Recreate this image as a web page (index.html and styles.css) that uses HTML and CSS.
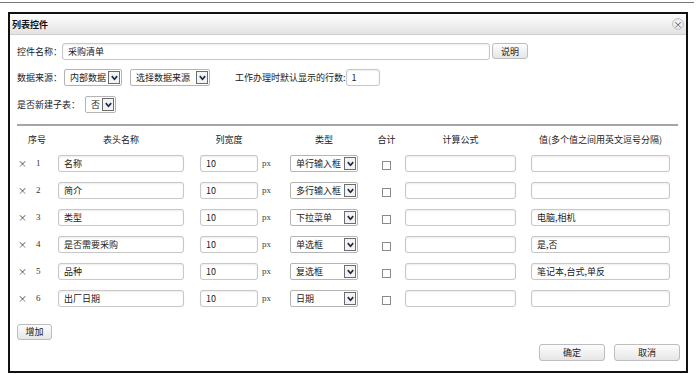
FILE: index.html
```html
<!DOCTYPE html>
<html lang="zh-CN">
  <head>
    <meta charset="UTF-8" />
    <meta name="viewport" content="width=device-width, initial-scale=1.0" />
    <title>列表控件</title>
    <link rel="stylesheet" href="styles.css">
  </head>
  <body>
    <div class="topline"></div>
    <div class="dialog">
      <div class="titlebar">
        <span class="title">列表控件</span>
        <span class="close">×</span>
      </div>

      <div class="content">
        <div class="form-row">
          <label>控件名称：</label>
          <input class="ipt ipt-name" type="text" value="采购清单" />
          <button class="btn btn-help">说明</button>
        </div>
        <div class="form-row">
          <label>数据来源：</label>
          <div class="sel sel-src"><span>内部数据</span><i class="arrow"><svg viewBox="0 0 10 10"><path d="M2 3.5 L5 7 L8 3.5" /></svg></i></div>
          <div class="sel sel-pick"><span>选择数据来源</span><i class="arrow"><svg viewBox="0 0 10 10"><path d="M2 3.5 L5 7 L8 3.5" /></svg></i></div>
          <label class="lbl-rows">工作办理时默认显示的行数:</label>
          <input class="ipt ipt-rows" type="text" value="1" />
        </div>
        <div class="form-row">
          <label>是否新建子表：</label>
          <div class="sel sel-sub"><span>否</span><i class="arrow"><svg viewBox="0 0 10 10"><path d="M2 3.5 L5 7 L8 3.5" /></svg></i></div>
        </div>

        <div class="line"></div>

        <table class="fields">
          <colgroup>
            <col style="width:18px" />
            <col style="width:18px" />
            <col style="width:136px" />
            <col style="width:74px" />
            <col style="width:32px" />
            <col style="width:68px" />
            <col style="width:47px" />
            <col style="width:111px" />
            <col style="width:154px" />
          </colgroup>
          <thead>
            <tr>
              <th colspan="2" class="c-no">序号</th>
              <th class="c-name">表头名称</th>
              <th class="c-width">列宽度</th>
              <th></th>
              <th>类型</th>
              <th class="c-sum">合计</th>
              <th>计算公式</th>
              <th class="c-value">值(多个值之间用英文逗号分隔)</th>
            </tr>
          </thead>
          <tbody>
            <tr>
              <td class="del">×</td><td class="num">1</td>
              <td class="c-name"><input class="ipt w-name" type="text" value="名称" /></td>
              <td class="c-width"><input class="ipt w-width" type="text" value="10" /></td>
              <td class="px">px</td>
              <td><div class="sel sel-type"><span>单行输入框</span><i class="arrow"><svg viewBox="0 0 10 10"><path d="M2 3.5 L5 7 L8 3.5" /></svg></i></div></td>
              <td class="c-sum"><span class="chk"></span></td>
              <td><input class="ipt w-formula" type="text" value="" /></td>
              <td class="c-value"><input class="ipt w-value" type="text" value="" /></td>
            </tr>
            <tr>
              <td class="del">×</td><td class="num">2</td>
              <td class="c-name"><input class="ipt w-name" type="text" value="简介" /></td>
              <td class="c-width"><input class="ipt w-width" type="text" value="10" /></td>
              <td class="px">px</td>
              <td><div class="sel sel-type"><span>多行输入框</span><i class="arrow"><svg viewBox="0 0 10 10"><path d="M2 3.5 L5 7 L8 3.5" /></svg></i></div></td>
              <td class="c-sum"><span class="chk"></span></td>
              <td><input class="ipt w-formula" type="text" value="" /></td>
              <td class="c-value"><input class="ipt w-value" type="text" value="" /></td>
            </tr>
            <tr>
              <td class="del">×</td><td class="num">3</td>
              <td class="c-name"><input class="ipt w-name" type="text" value="类型" /></td>
              <td class="c-width"><input class="ipt w-width" type="text" value="10" /></td>
              <td class="px">px</td>
              <td><div class="sel sel-type"><span>下拉菜单</span><i class="arrow"><svg viewBox="0 0 10 10"><path d="M2 3.5 L5 7 L8 3.5" /></svg></i></div></td>
              <td class="c-sum"><span class="chk"></span></td>
              <td><input class="ipt w-formula" type="text" value="" /></td>
              <td class="c-value"><input class="ipt w-value" type="text" value="电脑,相机" /></td>
            </tr>
            <tr>
              <td class="del">×</td><td class="num">4</td>
              <td class="c-name"><input class="ipt w-name" type="text" value="是否需要采购" /></td>
              <td class="c-width"><input class="ipt w-width" type="text" value="10" /></td>
              <td class="px">px</td>
              <td><div class="sel sel-type"><span>单选框</span><i class="arrow"><svg viewBox="0 0 10 10"><path d="M2 3.5 L5 7 L8 3.5" /></svg></i></div></td>
              <td class="c-sum"><span class="chk"></span></td>
              <td><input class="ipt w-formula" type="text" value="" /></td>
              <td class="c-value"><input class="ipt w-value" type="text" value="是,否" /></td>
            </tr>
            <tr>
              <td class="del">×</td><td class="num">5</td>
              <td class="c-name"><input class="ipt w-name" type="text" value="品种" /></td>
              <td class="c-width"><input class="ipt w-width" type="text" value="10" /></td>
              <td class="px">px</td>
              <td><div class="sel sel-type"><span>复选框</span><i class="arrow"><svg viewBox="0 0 10 10"><path d="M2 3.5 L5 7 L8 3.5" /></svg></i></div></td>
              <td class="c-sum"><span class="chk"></span></td>
              <td><input class="ipt w-formula" type="text" value="" /></td>
              <td class="c-value"><input class="ipt w-value" type="text" value="笔记本,台式,单反" /></td>
            </tr>
            <tr>
              <td class="del">×</td><td class="num">6</td>
              <td class="c-name"><input class="ipt w-name" type="text" value="出厂日期" /></td>
              <td class="c-width"><input class="ipt w-width" type="text" value="10" /></td>
              <td class="px">px</td>
              <td><div class="sel sel-type"><span>日期</span><i class="arrow"><svg viewBox="0 0 10 10"><path d="M2 3.5 L5 7 L8 3.5" /></svg></i></div></td>
              <td class="c-sum"><span class="chk"></span></td>
              <td><input class="ipt w-formula" type="text" value="" /></td>
              <td class="c-value"><input class="ipt w-value" type="text" value="" /></td>
            </tr>
          </tbody>
        </table>

        <button class="btn btn-add">增加</button>

        <div class="footer">
          <button class="btn btn-foot">确定</button>
          <button class="btn btn-foot">取消</button>
        </div>
      </div>
    </div>
  </body>
</html>
```

FILE: styles.css
```css
* {
  margin: 0;
  padding: 0;
  box-sizing: border-box;
}
body {
  background: #fff;
  color: #222;
  font-family: "Noto Sans CJK SC", "Noto Sans", sans-serif;
  font-size: 9px;
}
.topline {
  width: 694px;
  height: 1px;
  margin-top: 2px;
  background: #777;
}
/* 弹窗 */
.dialog {
  width: 680px;
  height: 361px;
  margin: 9px 0 0 8px;
  border: 2px solid #111;
  background: #fff;
}
.titlebar {
  display: flex;
  justify-content: space-between;
  align-items: center;
  height: 21px;
  padding: 0 2px 0 2px;
  background: linear-gradient(#fefefe, #e3e3e3);
  border-bottom: 1px solid #cfcfcf;
}
.title {
  font-weight: bold;
  color: #111;
}
.close {
  display: flex;
  justify-content: center;
  align-items: center;
  width: 12px;
  height: 12px;
  border: 1px solid #c4c4c4;
  border-radius: 50%;
  background: radial-gradient(#fff, #dedede);
  color: #444;
  font-size: 9px;
  line-height: 1;
}
.content {
  padding: 3px 4px 0 7px;
}
/* 表单行 */
.form-row {
  display: flex;
  align-items: center;
  height: 26.5px;
}
.form-row label {
  color: #222;
}
.ipt {
  height: 17px;
  padding: 0 5px;
  border: 1px solid #c8c8c8;
  border-radius: 3px;
  background: #fff;
  box-shadow: inset 0 1px 2px rgba(0, 0, 0, 0.08), 0 0 1px rgba(0, 0, 0, 0.08);
  font-family: inherit;
  font-size: 9px;
  color: #222;
  outline: none;
}
.ipt-name {
  width: 428px;
}
.ipt-rows {
  width: 34px;
  margin-left: 0;
}
.lbl-rows {
  margin-left: 25px;
}
.btn {
  height: 16px;
  border: 1px solid #bdbdbd;
  border-radius: 3px;
  background: linear-gradient(#fdfdfd, #e6e6e6);
  font-family: inherit;
  font-size: 9px;
  color: #222;
}
.btn-help {
  width: 36px;
  margin-left: 2px;
}
/* 下拉框 */
.sel {
  display: inline-flex;
  align-items: center;
  height: 17px;
  padding: 0 1px 0 5px;
  border: 1px solid #b4b4b4;
  border-radius: 2px;
  background: #fff;
  white-space: nowrap;
}
.sel span {
  flex: 1;
}
.arrow {
  display: flex;
  justify-content: center;
  align-items: center;
  width: 12px;
  height: 13px;
  border: 1px solid #6d6d6d;
  background: #f3f3f3;
}
.arrow svg {
  width: 9px;
  height: 9px;
  fill: none;
  stroke: #1b2a4a;
  stroke-width: 1.8;
}
.sel-src {
  width: 58px;
  margin-left: 2px;
}
.sel-pick {
  width: 80px;
  margin-left: 8px;
}
.sel-sub {
  width: 31px;
  margin-left: 5px;
}
.sel-type {
  width: 68px;
}
.line {
  height: 2px;
  margin: 6px 4px 0 0;
  background: #a6a6a6;
}
/* 字段表格 */
.fields {
  margin: 4px 0 0 -5px;
  border-collapse: collapse;
  table-layout: fixed;
}
.fields th {
  height: 20px;
  font-weight: normal;
  text-align: center;
  color: #222;
}
.fields td {
  height: 27px;
  vertical-align: middle;
}
.fields .c-no {
  padding-left: 16px;
  text-align: left;
}
.c-name {
  padding-left: 10px;
}
.c-width {
  padding-left: 16px;
}
.c-sum {
  padding-left: 10px;
  text-align: center;
}
.c-value {
  padding-left: 15px;
}
.del {
  padding-left: 6px;
  color: #444;
}
.num {
  padding-left: 6px;
  font-family: "Liberation Serif", serif;
  color: #333;
}
.px {
  padding-left: 4px;
  font-family: "Liberation Serif", serif;
  color: #444;
}
.w-name {
  width: 126px;
}
.w-width {
  width: 58px;
}
.w-formula {
  width: 111px;
}
.w-value {
  width: 139px;
}
.chk {
  display: inline-block;
  width: 9px;
  height: 9px;
  margin-top: 2px;
  border: 1px solid #8a8a8a;
  background: #fff;
  vertical-align: middle;
}
.btn-add {
  width: 35px;
  margin-top: 12px;
}
.footer {
  display: flex;
  justify-content: flex-end;
  gap: 9px;
  margin-top: 4px;
  padding-right: 2px;
}
.btn-foot {
  width: 66px;
  height: 17px;
}
```
